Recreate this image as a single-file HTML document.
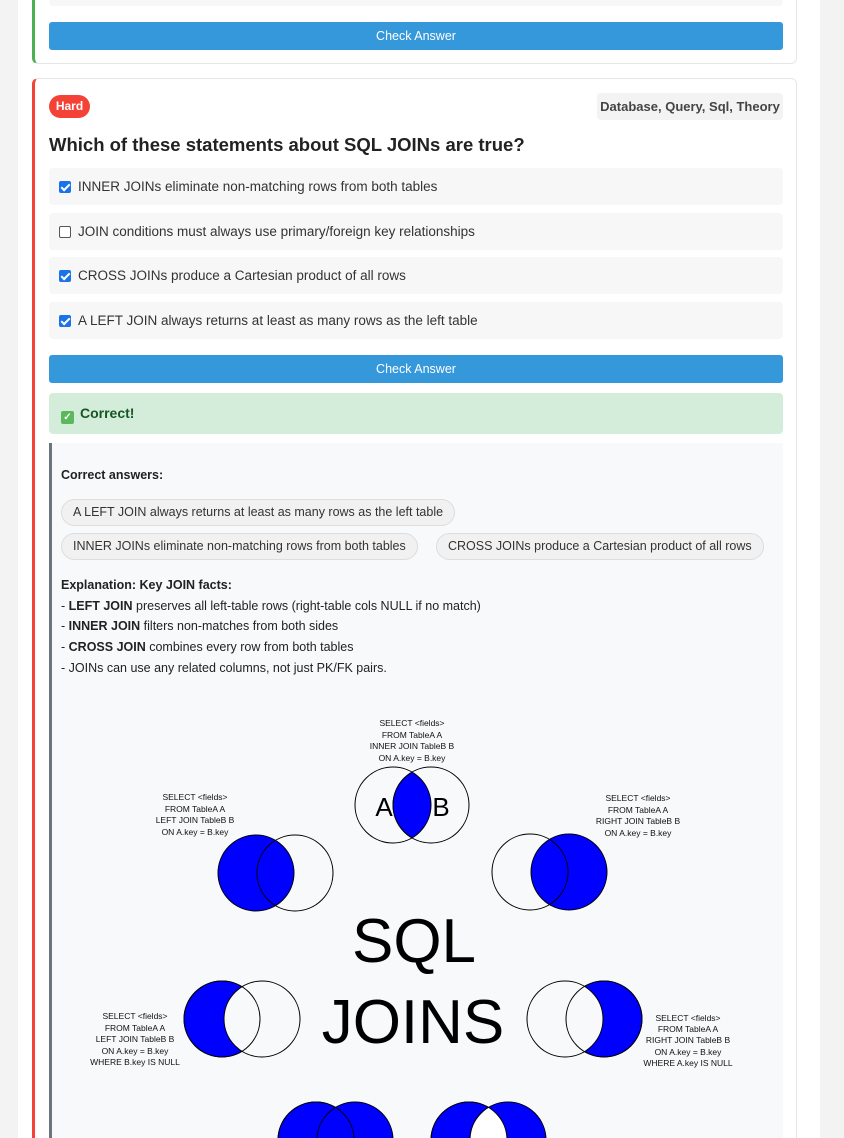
<!DOCTYPE html>
<html style="width:844px;height:1138px;overflow:hidden"><head><meta charset="utf-8"><style>
*{box-sizing:border-box;margin:0;padding:0}
body{width:844px;height:1138px;overflow:hidden;background:#f3f3f3;font-family:"Liberation Sans",sans-serif;color:#222;position:relative}
.wrap{position:absolute;left:18px;top:0;width:802px;height:1138px;background:#fff}
.card{position:absolute;left:32px;width:765px;background:#fff;border:1px solid #e6e6e6;border-radius:6px}
.btn{position:absolute;left:49px;width:734px;height:28px;background:#3498db;color:#fff;font-size:12.5px;text-align:center;line-height:28px;border-radius:3px}
.opt{position:absolute;left:49px;width:734px;height:37px;background:#f7f7f7;border-radius:4px;font-size:13.5px;line-height:37px;padding-left:29px;color:#333}
.cb{position:absolute;left:10px;top:13px;width:12px;height:12px;border-radius:2px}
.on{background:#1a73e8}
.on:after{content:"";position:absolute;left:4px;top:1px;width:3px;height:7px;border:solid #fff;border-width:0 2px 2px 0;transform:rotate(45deg)}
.off{border:1px solid #555;background:#fff}
.pill{position:absolute;height:27px;border:1px solid #ddd;border-radius:14px;background:#f1f1f1;font-size:12.5px;line-height:25px;padding:0 11px;color:#333;white-space:nowrap}
.ex{position:absolute;left:61px;font-size:12.5px;color:#222}
b{font-weight:bold}
</style></head><body>
<div class="wrap"></div>
<div class="card" style="top:-10px;height:74px;border-left:3px solid #4caf50"></div>
<div style="position:absolute;left:49px;top:0;width:734px;height:6px;background:#f7f7f7;border-radius:0 0 4px 4px"></div>
<div class="btn" style="top:22px">Check Answer</div>

<div class="card" style="top:78px;height:1060px;border-left:3px solid #f44336;border-bottom:none;border-radius:6px 6px 0 0"></div>
<div style="position:absolute;left:49px;top:95px;width:41px;height:23px;background:#f44336;color:#fff;border-radius:12px;font-size:12px;font-weight:bold;line-height:23px;text-align:center">Hard</div>
<div style="position:absolute;left:597px;top:93px;width:186px;height:27px;background:#f3f3f3;border-radius:4px;font-size:13px;font-weight:bold;line-height:27px;text-align:center;color:#444">Database, Query, Sql, Theory</div>
<div style="position:absolute;left:49px;top:134px;font-size:18.5px;font-weight:bold;color:#222">Which of these statements about SQL JOINs are true?</div>
<div class="opt" style="top:168px"><span class="cb on"></span>INNER JOINs eliminate non-matching rows from both tables</div>
<div class="opt" style="top:213px"><span class="cb off"></span>JOIN conditions must always use primary/foreign key relationships</div>
<div class="opt" style="top:257px"><span class="cb on"></span>CROSS JOINs produce a Cartesian product of all rows</div>
<div class="opt" style="top:302px"><span class="cb on"></span>A LEFT JOIN always returns at least as many rows as the left table</div>
<div class="btn" style="top:355px">Check Answer</div>
<div style="position:absolute;left:49px;top:393px;width:734px;height:41px;background:#d4edda;border-radius:4px;font-size:14px;font-weight:bold;color:#155724;line-height:41px;padding-left:12px"><span style="display:inline-block;width:13px;height:13px;background:#5cb85c;border-radius:2px;vertical-align:-2px;color:#fff;font-size:10px;line-height:13px;text-align:center;margin-right:6px">✓</span>Correct!</div>
<div style="position:absolute;left:49px;top:443px;width:734px;height:700px;background:#f8f9fa;border-left:3px solid #6c757d"></div>
<div class="ex" style="top:468px;font-weight:bold">Correct answers:</div>
<div class="pill" style="left:61px;top:499px">A LEFT JOIN always returns at least as many rows as the left table</div>
<div class="pill" style="left:61px;top:533px">INNER JOINs eliminate non-matching rows from both tables</div>
<div class="pill" style="left:436px;top:533px">CROSS JOINs produce a Cartesian product of all rows</div>
<div class="ex" style="top:575px;line-height:20.7px"><b>Explanation:</b> <b>Key JOIN facts:</b><br>- <b>LEFT JOIN</b> preserves all left-table rows (right-table cols NULL if no match)<br>- <b>INNER JOIN</b> filters non-matches from both sides<br>- <b>CROSS JOIN</b> combines every row from both tables<br>- JOINs can use any related columns, not just PK/FK pairs.</div>

<svg width="844" height="1138" style="position:absolute;left:0;top:0" font-family="Liberation Sans, sans-serif">
<defs>
<clipPath id="c1"><ellipse cx="393" cy="805" rx="38" ry="38"/></clipPath>
<clipPath id="c8"><ellipse cx="469" cy="1140" rx="38" ry="38"/></clipPath>
</defs>
<g stroke="#000" stroke-width="1" fill="none">
<ellipse cx="431" cy="805" rx="38" ry="38" fill="#0000ff" clip-path="url(#c1)"/>
<ellipse cx="393" cy="805" rx="38" ry="38"/><ellipse cx="431" cy="805" rx="38" ry="38"/>
<ellipse cx="256" cy="873" rx="38" ry="38" fill="#0000ff"/>
<ellipse cx="295" cy="873" rx="38" ry="38"/>
<ellipse cx="569" cy="872" rx="38" ry="38" fill="#0000ff"/>
<ellipse cx="530" cy="872" rx="38" ry="38"/>
<ellipse cx="222" cy="1019" rx="38" ry="38" fill="#0000ff"/>
<ellipse cx="262" cy="1019" rx="38" ry="38" fill="#f8f9fa"/>
<ellipse cx="222" cy="1019" rx="38" ry="38"/>
<ellipse cx="604" cy="1019" rx="38" ry="38" fill="#0000ff"/>
<ellipse cx="565" cy="1019" rx="38" ry="38" fill="#f8f9fa"/>
<ellipse cx="604" cy="1019" rx="38" ry="38"/>
<ellipse cx="316" cy="1140" rx="38" ry="38" fill="#0000ff"/>
<ellipse cx="355" cy="1140" rx="38" ry="38" fill="#0000ff"/>
<ellipse cx="316" cy="1140" rx="38" ry="38"/>
<ellipse cx="469" cy="1140" rx="38" ry="38" fill="#0000ff"/>
<ellipse cx="508" cy="1140" rx="38" ry="38" fill="#0000ff"/>
<ellipse cx="508" cy="1140" rx="38" ry="38" fill="#fff" clip-path="url(#c8)"/>
<ellipse cx="469" cy="1140" rx="38" ry="38"/>
</g>
<g font-size="8.5" text-anchor="middle" fill="#111">
<text x="412" y="726">SELECT &lt;fields&gt;</text><text x="412" y="738">FROM TableA  A</text><text x="412" y="749">INNER JOIN TableB  B</text><text x="412" y="761">ON A.key = B.key</text>
<text x="195" y="800">SELECT &lt;fields&gt;</text><text x="195" y="812">FROM TableA  A</text><text x="195" y="823">LEFT JOIN TableB  B</text><text x="195" y="835">ON A.key = B.key</text>
<text x="638" y="801">SELECT &lt;fields&gt;</text><text x="638" y="813">FROM TableA  A</text><text x="638" y="824">RIGHT JOIN TableB  B</text><text x="638" y="836">ON A.key = B.key</text>
<text x="135" y="1019">SELECT &lt;fields&gt;</text><text x="135" y="1031">FROM TableA  A</text><text x="135" y="1042">LEFT JOIN TableB  B</text><text x="135" y="1054">ON A.key = B.key</text><text x="135" y="1065">WHERE B.key IS NULL</text>
<text x="688" y="1021">SELECT &lt;fields&gt;</text><text x="688" y="1032">FROM TableA  A</text><text x="688" y="1043">RIGHT JOIN TableB  B</text><text x="688" y="1055">ON A.key = B.key</text><text x="688" y="1066">WHERE A.key IS NULL</text>
</g>
<text x="384" y="816" font-size="26" text-anchor="middle">A</text>
<text x="441" y="816" font-size="26" text-anchor="middle">B</text>
<text x="414" y="962" font-size="62" text-anchor="middle">SQL</text>
<text x="413" y="1043" font-size="62" text-anchor="middle">JOINS</text>
</svg>
</body></html>
